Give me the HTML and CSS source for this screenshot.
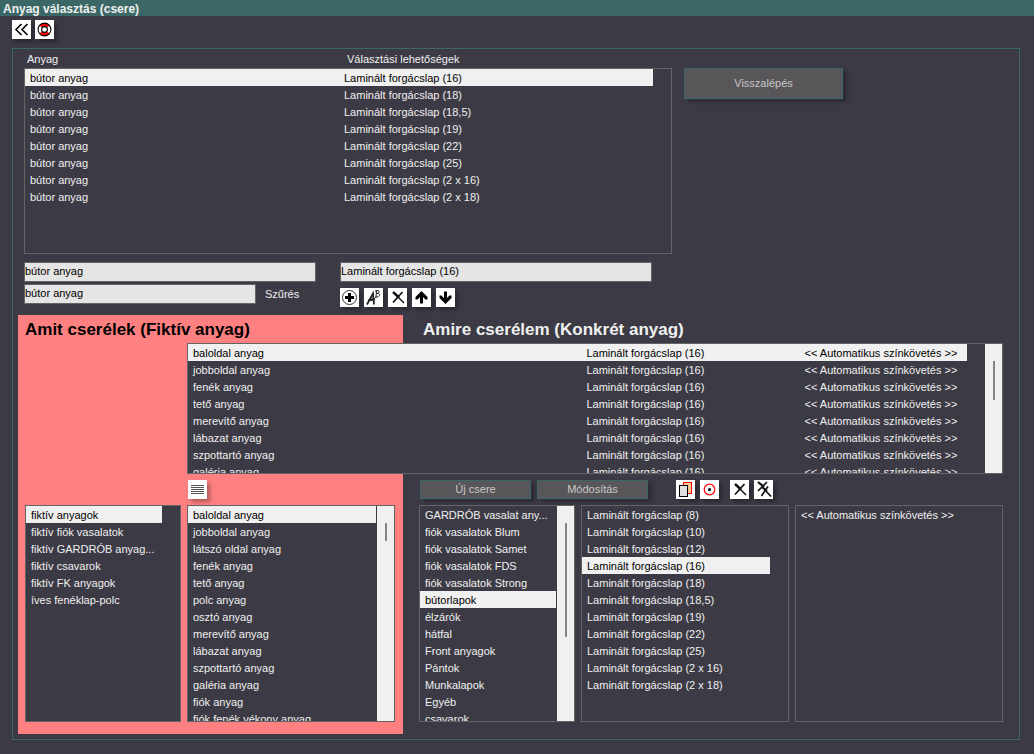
FILE: index.html
```html
<!DOCTYPE html>
<html lang="hu">
<head>
    <meta charset="UTF-8">
    <meta name="viewport" content="width=device-width, initial-scale=1.0">
    <title>Anyag választás (csere)</title>

    <link rel="stylesheet" href="styles.css">

</head>
<body>

    <h1 class="title-bar">Anyag választás (csere)</h1>

    <div class="toolbar">
        <button class="icon-btn" type="button" aria-label="Vissza">
            <svg viewBox="0 0 19 19"><path d="M9.5 4 L4 9.5 L9.5 15 M15.5 4 L10 9.5 L15.5 15" fill="none" stroke="#000" stroke-width="1.6"/></svg>
        </button>
        <button class="icon-btn" type="button" aria-label="Súgó">
            <svg viewBox="0 0 19 19">
                <circle cx="9.5" cy="9.5" r="4.7" fill="none" stroke="#fff" stroke-width="3"/>
                <path d="M5.6 6.4 A5 5 0 0 1 13.4 6.4 M5.6 12.6 A5 5 0 0 0 13.4 12.6" fill="none" stroke="#f00" stroke-width="3.2"/>
                <circle cx="9.5" cy="9.5" r="6.4" fill="none" stroke="#000" stroke-width="1.1"/>
                <circle cx="9.5" cy="9.5" r="2.9" fill="#fff" stroke="#000" stroke-width="1.1"/>
            </svg>
        </button>
    </div>

    <main class="panel">

        <section class="top">
            <div class="materials">
                <div class="list-head">
                    <span>Anyag</span>
                    <span>Választási lehetőségek</span>
                </div>
                <div class="list list-top">
                    <table class="rows cols-two">
                        <tr class="selected"><td>bútor anyag</td><td>Laminált forgácslap (16)</td></tr>
                        <tr><td>bútor anyag</td><td>Laminált forgácslap (18)</td></tr>
                        <tr><td>bútor anyag</td><td>Laminált forgácslap (18,5)</td></tr>
                        <tr><td>bútor anyag</td><td>Laminált forgácslap (19)</td></tr>
                        <tr><td>bútor anyag</td><td>Laminált forgácslap (22)</td></tr>
                        <tr><td>bútor anyag</td><td>Laminált forgácslap (25)</td></tr>
                        <tr><td>bútor anyag</td><td>Laminált forgácslap (2 x 16)</td></tr>
                        <tr><td>bútor anyag</td><td>Laminált forgácslap (2 x 18)</td></tr>
                    </table>
                </div>

                <div class="fields">
                    <div class="fields-left">
                        <input class="field" type="text" value="bútor anyag" aria-label="Anyag">
                        <div class="filter">
                            <input class="field" id="szures" type="text" value="bútor anyag">
                            <label for="szures">Szűrés</label>
                        </div>
                    </div>
                    <div class="fields-right">
                        <input class="field" type="text" value="Laminált forgácslap (16)" aria-label="Választási lehetőség">
                        <div class="icons">
                            <button class="icon-btn" type="button" aria-label="Új">
                                <svg viewBox="0 0 19 19"><circle cx="9.5" cy="9.5" r="7" fill="none" stroke="#333" stroke-width="1"/><path d="M9.5 5 V14 M5 9.5 H14" stroke="#000" stroke-width="3"/></svg>
                            </button>
                            <button class="icon-btn" type="button" aria-label="Átnevezés">
                                <svg viewBox="0 0 19 19" fill="none" stroke="#222"><path d="M3 16.5 L9 5.5 L10 16.5 M4 12.5 L11 11" stroke-width="1.8"/><path d="M12.5 2.5 L12 9 M11 3 C16.5 1 16 5 12.5 5.5 C17.5 5 16.5 9 11 9.5" stroke-width="1"/></svg>
                            </button>
                            <button class="icon-btn" type="button" aria-label="Törlés">
                                <svg viewBox="0 0 19 19" fill="none" stroke="#111"><path d="M5 4 L11 9.5" stroke-width="2.4"/><path d="M10 9 L16 15" stroke-width="1.4"/><path d="M14.500 4 L9.5 9.5 L5 14.500" stroke-width="1.7"/></svg>
                            </button>
                            <button class="icon-btn" type="button" aria-label="Fel">
                                <svg viewBox="0 0 19 19"><path d="M9.5 3 L15.5 9 V11.500 H13.500 L11 9 V15.500 H8 V9 L5.500 11.500 H3.500 V9 Z"/></svg>
                            </button>
                            <button class="icon-btn" type="button" aria-label="Le">
                                <svg viewBox="0 0 19 19"><path d="M9.5 16 L15.5 10 V7.500 H13.500 L11 10 V3.500 H8 V10 L5.500 7.500 H3.500 V10 Z"/></svg>
                            </button>
                        </div>
                    </div>
                </div>
            </div>

            <button class="btn btn-back" type="button">Visszalépés</button>
        </section>

        <section class="swap">
            <div class="pink"></div>

            <h2 class="heading heading-from">Amit cserélek (Fiktív anyag)</h2>
            <h2 class="heading heading-to">Amire cserélem (Konkrét anyag)</h2>

            <div class="list list-swap">
                <table class="rows cols-three">
                    <tr class="selected"><td>baloldal anyag</td><td>Laminált forgácslap (16)</td><td>&lt;&lt; Automatikus színkövetés &gt;&gt;</td></tr>
                    <tr><td>jobboldal anyag</td><td>Laminált forgácslap (16)</td><td>&lt;&lt; Automatikus színkövetés &gt;&gt;</td></tr>
                    <tr><td>fenék anyag</td><td>Laminált forgácslap (16)</td><td>&lt;&lt; Automatikus színkövetés &gt;&gt;</td></tr>
                    <tr><td>tető anyag</td><td>Laminált forgácslap (16)</td><td>&lt;&lt; Automatikus színkövetés &gt;&gt;</td></tr>
                    <tr><td>merevítő anyag</td><td>Laminált forgácslap (16)</td><td>&lt;&lt; Automatikus színkövetés &gt;&gt;</td></tr>
                    <tr><td>lábazat anyag</td><td>Laminált forgácslap (16)</td><td>&lt;&lt; Automatikus színkövetés &gt;&gt;</td></tr>
                    <tr><td>szpottartó anyag</td><td>Laminált forgácslap (16)</td><td>&lt;&lt; Automatikus színkövetés &gt;&gt;</td></tr>
                    <tr><td>galéria anyag</td><td>Laminált forgácslap (16)</td><td>&lt;&lt; Automatikus színkövetés &gt;&gt;</td></tr>
                </table>
                <div class="scrollbar"><div class="thumb thumb-swap"></div></div>
            </div>

            <div class="actions actions-from">
                <button class="icon-btn" type="button" aria-label="Lista">
                    <svg viewBox="0 0 19 19"><path d="M3 5.500 H16 M3 7.500 H16 M3 9.500 H16 M3 11.500 H16 M3 13.500 H16" stroke="#555" stroke-width="1"/></svg>
                </button>
            </div>

            <div class="actions actions-to">
                <button class="btn btn-small" type="button">Új csere</button>
                <button class="btn btn-small" type="button">Módosítás</button>
                <div class="icons icons-copy">
                    <button class="icon-btn" type="button" aria-label="Másolás">
                        <svg viewBox="0 0 19 19"><rect x="7.500" y="2.500" width="8" height="11" fill="#ffc890" stroke="#f00"/><rect x="3.500" y="5.500" width="8" height="11" fill="#e0e0e0" stroke="#000"/></svg>
                    </button>
                    <button class="icon-btn" type="button" aria-label="Cél">
                        <svg viewBox="0 0 19 19"><circle cx="9.500" cy="9.500" r="5.300" fill="none" stroke="#f00" stroke-width="1.200"/><circle cx="9.500" cy="9.500" r="1.500"/></svg>
                    </button>
                </div>
                <div class="icons">
                    <button class="icon-btn" type="button" aria-label="Törlés">
                        <svg viewBox="0 0 19 19" fill="none" stroke="#111"><path d="M5 4 L11 9.5" stroke-width="2.4"/><path d="M10 9 L16 15" stroke-width="1.4"/><path d="M14.500 4 L9.5 9.5 L5 14.500" stroke-width="1.7"/></svg>
                    </button>
                    <button class="icon-btn" type="button" aria-label="Összes törlése">
                        <svg viewBox="0 0 19 19" fill="none" stroke="#111"><path d="M4 2 L10 7 M8 7 L13 11" stroke-width="2.2"/><path d="M11 10 L17 16.5" stroke-width="1.8"/><path d="M13 2 L8.5 6.5 L4 11 M14 6.5 L11 10.5 L7.5 16" stroke-width="1.7"/></svg>
                    </button>
                </div>
            </div>

            <div class="list list-groups">
                <ul class="rows">
                    <li class="selected">fiktív anyagok</li>
                    <li>fiktív fiók vasalatok</li>
                    <li>fiktív GARDRÓB anyag...</li>
                    <li>fiktív csavarok</li>
                    <li>fiktív FK anyagok</li>
                    <li>íves fenéklap-polc</li>
                </ul>
            </div>

            <div class="list list-from">
                <ul class="rows">
                    <li class="selected">baloldal anyag</li>
                    <li>jobboldal anyag</li>
                    <li>látszó oldal anyag</li>
                    <li>fenék anyag</li>
                    <li>tető anyag</li>
                    <li>polc anyag</li>
                    <li>osztó anyag</li>
                    <li>merevítő anyag</li>
                    <li>lábazat anyag</li>
                    <li>szpottartó anyag</li>
                    <li>galéria anyag</li>
                    <li>fiók anyag</li>
                    <li>fiók fenék vékony anyag</li>
                </ul>
                <div class="scrollbar"><div class="thumb thumb-from"></div></div>
            </div>

            <div class="list list-types">
                <ul class="rows">
                    <li>GARDRÓB vasalat any...</li>
                    <li>fiók vasalatok Blum</li>
                    <li>fiók vasalatok Samet</li>
                    <li>fiók vasalatok FDS</li>
                    <li>fiók vasalatok Strong</li>
                    <li class="selected">bútorlapok</li>
                    <li>élzárók</li>
                    <li>hátfal</li>
                    <li>Front anyagok</li>
                    <li>Pántok</li>
                    <li>Munkalapok</li>
                    <li>Egyéb</li>
                    <li>csavarok</li>
                </ul>
                <div class="scrollbar"><div class="thumb thumb-types"></div></div>
            </div>

            <div class="list list-boards">
                <ul class="rows">
                    <li>Laminált forgácslap (8)</li>
                    <li>Laminált forgácslap (10)</li>
                    <li>Laminált forgácslap (12)</li>
                    <li class="selected">Laminált forgácslap (16)</li>
                    <li>Laminált forgácslap (18)</li>
                    <li>Laminált forgácslap (18,5)</li>
                    <li>Laminált forgácslap (19)</li>
                    <li>Laminált forgácslap (22)</li>
                    <li>Laminált forgácslap (25)</li>
                    <li>Laminált forgácslap (2 x 16)</li>
                    <li>Laminált forgácslap (2 x 18)</li>
                </ul>
            </div>

            <div class="list list-colors">
                <ul class="rows">
                    <li>&lt;&lt; Automatikus színkövetés &gt;&gt;</li>
                </ul>
            </div>
        </section>

    </main>

</body>
</html>
```

FILE: styles.css
```css
:root {
    --bg: #3c3b45;
    --teal: #3b6866;
    --line: #646464;
    --light: #f0f0f0;
}

*, *::before, *::after {
    margin: 0;
    padding: 0;
    box-sizing: border-box;
}

body {
    background-color: var(--bg);
    color: var(--light);
    font-family: "Liberation Sans", Arial, sans-serif;
    font-size: 11px;
    line-height: 17px;
}

button, input {
    font: inherit;
}

.title-bar {
    height: 16px;
    padding-left: 3px;
    background-color: var(--teal);
    font-size: 12px;
    line-height: 18px;
}

.toolbar {
    display: flex;
    gap: 4px;
    padding: 4px 12px 9px;
}

.icon-btn {
    width: 19px;
    height: 19px;
    border: none;
    background-color: white;
    box-shadow: 3px 3px 4px rgba(0, 0, 0, 0.3);
}

.icon-btn svg {
    display: block;
    width: 19px;
    height: 19px;
}

.icons {
    display: flex;
    gap: 5px;
}

.panel {
    margin: 0 14px 14px 12px;
    padding: 2px 0 5px 5px;
    border: 1px solid var(--teal);
}

/* upper part */
.top {
    display: grid;
    grid-template-columns: 648fr 159fr 164fr;
    column-gap: 12px;
    padding-left: 6px;
    align-items: start;
}

.list-head {
    display: grid;
    grid-template-columns: 320fr 325fr;
    padding-left: 3px;
}

.list {
    display: flex;
    justify-content: space-between;
    border: 1px solid var(--line);
    background-color: var(--bg);
    overflow: hidden;
}

.list-top {
    height: 186px;
    padding-right: 18px;
}

.rows {
    flex: 1;
    align-self: flex-start;
    min-width: 0;
    border-collapse: collapse;
    table-layout: fixed;
    list-style: none;
}

.rows td, .rows li {
    height: 17px;
    padding: 2px 0 0 5px;
    line-height: 15px;
    white-space: nowrap;
    overflow: hidden;
}

.selected {
    background-color: var(--light);
    color: black;
}

.cols-two td {
    width: 50%;
}

.fields {
    display: grid;
    grid-template-columns: 292fr 312fr;
    column-gap: 24px;
    padding: 8px 20px 0 0;
}

.field {
    display: block;
    width: 100%;
    height: 20px;
    padding: 0 0 2px;
    border: 1px solid var(--line);
    background-color: #e5e5e5;
    color: black;
}

.filter {
    display: grid;
    grid-template-columns: 232fr 51fr;
    column-gap: 9px;
    align-items: center;
    margin-top: 2px;
}

.fields-right .icons {
    margin-top: 6px;
}

.btn {
    border: 1px solid var(--teal);
    background-color: #585658;
    color: #c8c8c8;
    box-shadow: 4px 3px 4px rgba(0, 0, 0, 0.25);
}

.btn-back {
    height: 31px;
    margin-top: 17px;
}

/* lower part */
.swap {
    display: grid;
    grid-template-columns: 7px 156fr 6px 208fr 8px 16px 156fr 6px 208fr 6px 208fr 16px;
    grid-template-rows: 28px 131px 31px 217px 12px;
    margin-top: 8px;
}

.pink {
    grid-area: 1 / 1 / 6 / 6;
    background-color: #ff8080;
}

.heading {
    font-size: 17px;
    line-height: 30px;
    white-space: nowrap;
}

.heading-from {
    grid-area: 1 / 2 / 2 / 6;
    color: black;
}

.heading-to {
    grid-area: 1 / 7 / 2 / 12;
    padding-left: 4px;
}

.list-swap {
    grid-area: 2 / 4 / 3 / 12;
}

.cols-three {
    margin-right: 17px;
}

.cols-three td:first-child {
    width: 50.5%;
}

.cols-three td:nth-child(2) {
    width: 28%;
}

.actions {
    display: flex;
    align-items: center;
}

.actions-from {
    grid-area: 3 / 4 / 4 / 5;
    padding-left: 1px;
}

.actions-to {
    grid-area: 3 / 7 / 4 / 12;
    gap: 6px;
    padding-left: 1px;
}

.btn-small {
    flex: 0 1 111px;
    height: 19px;
    line-height: 17px;
}

.icons-copy {
    margin: 0 5px 0 22px;
}

.list-groups {
    grid-area: 4 / 2 / 5 / 3;
    padding-right: 18px;
}

.list-from {
    grid-area: 4 / 4 / 5 / 5;
}

.list-types {
    grid-area: 4 / 7 / 5 / 8;
}

.list-boards {
    grid-area: 4 / 9 / 5 / 10;
    padding-right: 18px;
}

.list-colors {
    grid-area: 4 / 11 / 5 / 12;
}

.scrollbar {
    flex: none;
    width: 17px;
    margin-left: 1px;
    padding: 17px 7px 0 8px;
    background-color: var(--light);
}

.thumb {
    background-color: #858585;
}

.thumb-swap {
    height: 39px;
}

.thumb-from {
    height: 18px;
}

.thumb-types {
    height: 114px;
}
```
